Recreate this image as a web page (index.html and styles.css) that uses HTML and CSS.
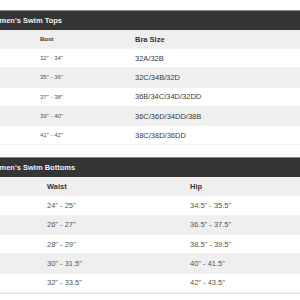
FILE: index.html
```html
<!DOCTYPE html>
<html>
<head>
<meta charset="utf-8">
<link rel="stylesheet" href="styles.css">
</head>
<body>
<div class="page">
  <section class="chart tops">
    <div class="title"><span class="title-text">Women's Swim Tops</span></div>
    <div class="row head"><span class="c1">Bust</span><span class="c2">Bra Size</span></div>
    <div class="row"><span class="c1">32" - 34"</span><span class="c2">32A/32B</span></div>
    <div class="row alt"><span class="c1">35" - 36"</span><span class="c2">32C/34B/32D</span></div>
    <div class="row"><span class="c1">37" - 38"</span><span class="c2">36B/34C/34D/32DD</span></div>
    <div class="row alt"><span class="c1">39" - 40"</span><span class="c2">36C/36D/34DD/38B</span></div>
    <div class="row"><span class="c1">41" - 42"</span><span class="c2">38C/38D/36DD</span></div>
  </section>
  <section class="chart bottoms">
    <div class="title"><span class="title-text">Women's Swim Bottoms</span></div>
    <div class="row head"><span class="c1">Waist</span><span class="c2">Hip</span></div>
    <div class="row"><span class="c1">24" - 25"</span><span class="c2">34.5" - 35.5"</span></div>
    <div class="row alt"><span class="c1">26" - 27"</span><span class="c2">36.5" - 37.5"</span></div>
    <div class="row"><span class="c1">28" - 29"</span><span class="c2">38.5" - 39.5"</span></div>
    <div class="row alt"><span class="c1">30" - 31.5"</span><span class="c2">40" - 41.5"</span></div>
    <div class="row"><span class="c1">32" - 33.5"</span><span class="c2">42" - 43.5"</span></div>
  </section>
</div>
</body>
</html>
```
FILE: styles.css
```css
* { box-sizing: border-box; }
html, body { margin: 0; padding: 0; background: #fff; }
body { font-family: "Liberation Sans", Arial, sans-serif; color: #333; }
.page { padding-top: 10px; width: 300px; overflow: hidden; }
.chart { display: flex; flex-direction: column; }
.bottoms { margin-top: 12px; border-bottom: 1px solid #e4e4e4; }
.title {
  height: 20px;
  background: #353535;
  border-top: 1px solid #8a8a8a;
  display: flex;
  align-items: center;
  overflow: hidden;
}
.title-text {
  color: #f0f0f0;
  font-weight: bold;
  font-size: 7.5px;
  margin-left: -12px;
  white-space: nowrap;
}
.row {
  height: 19.3px;
  display: flex;
  align-items: center;
  background: #fff;
  border-bottom: 1px solid #f3f3f3;
}
.row.alt, .row.head { background: #efefef; }
.row.head { height: 19px; }
.c1, .c2 { white-space: nowrap; }
.tops .c1 { margin-left: 40px; width: 95px; font-size: 6px; color: #555; }
.tops .c2 { font-size: 7.5px; color: #3a3a3a; }
.tops .head .c1 { font-size: 6px; font-weight: bold; color: #333; }
.tops .head .c2 { font-size: 7.5px; font-weight: bold; color: #333; }
.bottoms .c1 { margin-left: 47px; width: 143px; font-size: 7.5px; color: #555; }
.bottoms .c2 { font-size: 7.5px; color: #555; }
.bottoms .head .c1, .bottoms .head .c2 { font-size: 7.5px; font-weight: bold; color: #333; }
```
